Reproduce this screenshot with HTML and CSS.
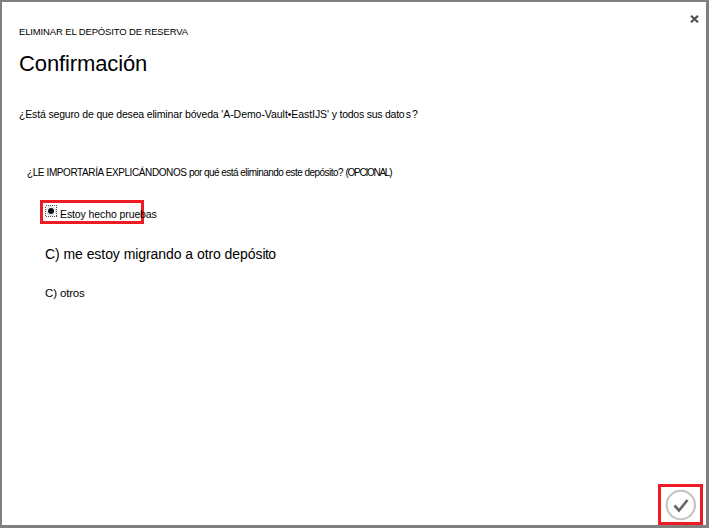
FILE: index.html
```html
<!DOCTYPE html>
<html lang="es">
<head>
<meta charset="utf-8">
<title>Confirmación</title>
<link rel="stylesheet" href="styles.css">
</head>
<body>
<main class="dialog">
  <header>
    <div class="eyebrow"><span>ELIMINAR EL DEPÓSITO DE RESERVA</span></div>
    <h1><span>Confirmación</span></h1>
  </header>
  <p class="question"><span>¿Está seguro de que desea eliminar bóveda <span class="vault">'A-Demo-Vault<b class="dot">•</b>EastIJS'</span> <span class="tail">y todos sus dato<i class="gap"></i>s<i class="gap"></i>?</span></span></p>
  <section class="survey">
    <p class="prompt"><span>¿LE IMPORTARÍA EXPLICÁNDONOS <span class="lower">por qué está eliminando este depósito?</span> <span class="tight">(OPCIONAL)</span></span></p>
    <div class="option first">
      <svg class="radio" width="12" height="12" viewBox="0 0 12 12"><rect x=".5" y=".5" width="11" height="11" fill="none" stroke="#444" stroke-dasharray="1 1" shape-rendering="crispEdges"/><circle cx="6" cy="6" r="4.5" fill="#fff" stroke="#a9c9dc" stroke-width=".8"/><circle cx="6" cy="6" r="3" fill="#111"/></svg>
      <span class="label">Estoy hecho pruebas</span>
    </div>
    <div class="option second"><span>C) me estoy migrando a otro depós<span class="squeeze">ito</span></span></div>
    <div class="option third"><span>C) otros</span></div>
  </section>
  <svg class="close" width="9" height="8" viewBox="0 0 9 8"><path d="M1 .7 8 7.3M8 .7 1 7.3" stroke="#505050" stroke-width="2.1"/></svg>
  <div class="confirm"><svg width="39" height="35" viewBox="0 0 39 35"><circle cx="19.8" cy="18" r="14.2" fill="#fff" stroke="#c3c3c3" stroke-width="2"/><path d="m13.5 18.5 4.5 5 8.5-10.5" fill="none" stroke="#686868" stroke-width="2.7"/></svg></div>
</main>
</body>
</html>
```
FILE: styles.css
```css
* { box-sizing: border-box; }
body { margin: 0; font-family: "Liberation Sans", Arial, sans-serif; color: #000; }
.dialog {
  position: relative;
  width: 709px;
  height: 528px;
  padding: 23px 0 0 17px;
  background: #fff;
  border: solid #808080;
  border-width: 2px 3px 3px 2px;
  overflow: hidden;
  white-space: nowrap;
}
.eyebrow { height: 14px; line-height: 14px; font-size: 9.5px; letter-spacing: -.14px; }
h1 { margin: 12px 0 0; height: 26px; line-height: 26px; font-size: 22px; font-weight: 400; letter-spacing: -.12px; }
.question { margin: 30px 0 0; height: 14px; line-height: 14px; font-size: 10.5px; letter-spacing: -.16px; }
.vault { letter-spacing: -.05px; }
.tail { letter-spacing: -.24px; }
.dot { font-size: 10px; font-weight: 400; }
.gap { display: inline-block; width: 1.3px; }
.survey { padding-left: 8px; }
.prompt { margin: 45px 0 0; height: 14px; line-height: 14px; font-size: 10px; letter-spacing: -.4px; }
.lower { letter-spacing: -.54px; }
.tight { letter-spacing: -1.25px; }
.option { margin-left: 18px; }
.first {
  position: relative;
  display: flex;
  width: 104px;
  height: 24px;
  margin: 20px 0 0 13px;
  padding: 2px 0 0 2px;
  border: 3px solid #ed1c24;
}
.radio { flex: none; }
.label { margin: 2px 0 0 3px; line-height: 14px; font-size: 10.5px; letter-spacing: -.1px; }
.second { margin-top: 21px; height: 18px; line-height: 18px; font-size: 14px; letter-spacing: -.06px; }
.squeeze { letter-spacing: -.6px; }
.third { margin-top: 23px; height: 14px; line-height: 14px; font-size: 11.5px; letter-spacing: -.15px; }
.close { position: absolute; right: 7px; top: 13px; }
.confirm {
  position: absolute;
  right: 3px;
  bottom: 0;
  width: 45px;
  height: 41px;
  border: 3px solid #ed1c24;
}
.confirm svg { display: block; }
```
